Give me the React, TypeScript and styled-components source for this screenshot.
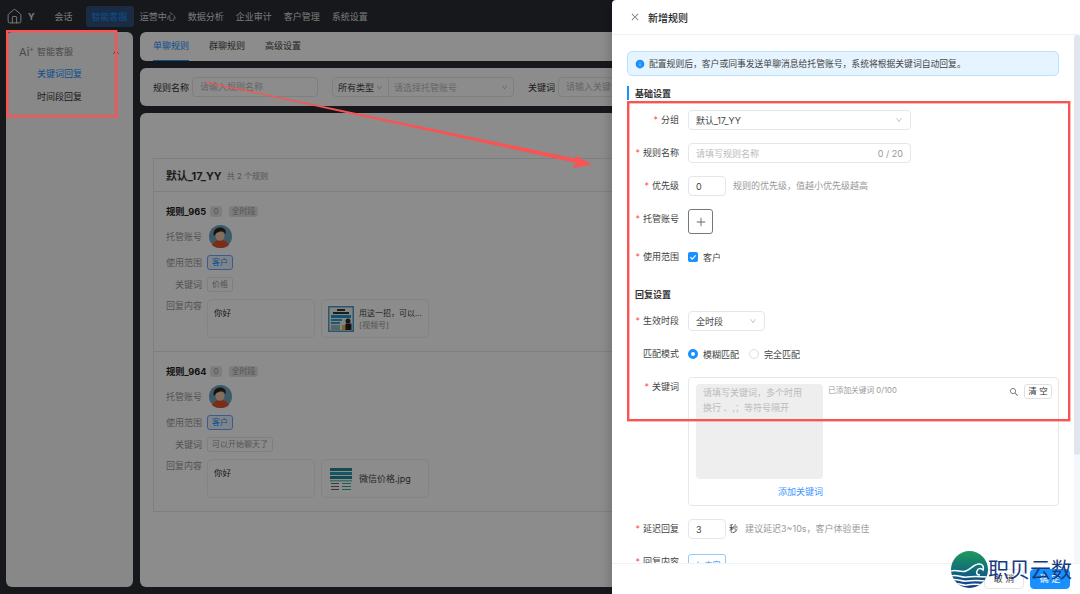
import React from "react";
import styled, { createGlobalStyle } from "styled-components";
import { House } from "lucide-react";
import {
  AiFillInfoCircle,
  AiOutlineClose,
  AiOutlineDown,
  AiOutlinePlus,
  AiOutlineSearch,
  AiOutlineUp,
} from "react-icons/ai";

const GlobalStyle = createGlobalStyle`
  html, body {
    margin: 0;
    padding: 0;
    height: 100%;
    overflow: hidden;
  }
  body {
    font-family: Inter, "Noto Sans CJK SC", sans-serif;
    font-size: 9px;
    color: #333;
  }
  * {
    box-sizing: border-box;
  }
`;

const NAV_ITEMS = ["运营中心", "数据分析", "企业审计", "客户管理", "系统设置"];

const Avatar = () => (
  <AvatarSvg viewBox="0 0 23 23">
    <circle cx="11.5" cy="11.5" r="11.5" fill="#6fa8bd" />
    <path d="M3 20c2-4 5-5 8.500-5s6.500 1 8.500 5c-2 2-5 3-8.500 3S5 22 3 20z" fill="#e0552b" />
    <ellipse cx="11" cy="11" rx="4.500" ry="4.800" fill="#f2c6a6" />
    <path d="M4.800 11c-1.500-6 3-8.500 6.500-8.500s6.500 2.500 5.200 7c-1-2.200-2.500-3.200-4.500-3.200-2 1-4 1-5 2-.5 1-1 1.900-2.200 2.700z" fill="#2b2320" />
  </AvatarSvg>
);

const VideoThumb = () => (
  <svg width="26" height="26" viewBox="0 0 26 26">
    <rect width="26" height="26" fill="#4f9fc9" />
    <rect x="1.500" y="1.500" width="23" height="23" fill="#eef3f2" />
    <rect x="9" y="3" width="8" height="2" fill="#333" />
    <rect x="5" y="6" width="16" height="2" fill="#333" />
    <rect x="3" y="9" width="20" height="3" fill="#1d9ad0" />
    <rect x="3" y="13" width="11" height="2" fill="#3aa0c8" />
    <rect x="3" y="16" width="9" height="2" fill="#3aa0c8" />
    <rect x="14" y="19" width="5" height="5" fill="#e9b949" />
    <circle cx="20" cy="15" r="2.500" fill="#2a2a2a" />
    <rect x="17.500" y="17.500" width="6" height="6.500" fill="#222" />
    <rect x="3" y="19" width="9" height="5" fill="#9bb" />
  </svg>
);

const ImageThumb = () => (
  <svg width="26" height="26" viewBox="0 0 26 26">
    <rect x="2" y="2" width="22" height="3" fill="#1f8a9c" />
    <rect x="2" y="6" width="22" height="3" fill="#2a9cb0" />
    <rect x="2" y="10" width="22" height="3" fill="#1f8a9c" />
    <rect x="2" y="14" width="22" height="1.500" fill="#7cc4c9" />
    <rect x="3" y="17" width="8" height="1" fill="#666" />
    <rect x="14" y="17" width="9" height="1" fill="#3a9" />
    <rect x="3" y="20" width="8" height="1" fill="#666" />
    <rect x="14" y="20" width="9" height="1" fill="#3a9" />
    <rect x="3" y="23" width="8" height="1" fill="#666" />
    <rect x="14" y="23" width="9" height="1" fill="#3a9" />
  </svg>
);

const RULES = [
  {
    name: "规则_965",
    keyword: "价格",
    thumb: <VideoThumb />,
    fileTitle: "用这一招，可以...",
    fileSub: "[视频号]",
  },
  {
    name: "规则_964",
    keyword: "可以开始聊天了",
    thumb: <ImageThumb />,
    fileTitle: "微信价格.jpg",
  },
];

const App = () => {
  return (
    <Page>
      <GlobalStyle />
      <Header>
        <Brand>
          <House size={17} strokeWidth={1.4} />
          <BrandLetter>Y</BrandLetter>
        </Brand>
        <NavItem $first>会话</NavItem>
        <NavItem $active>智能客服</NavItem>
        {NAV_ITEMS.map((item) => (
          <NavItem key={item}>{item}</NavItem>
        ))}
      </Header>

      <Workspace>
        <Sidebar>
          <SideHead>
            <AiMark>
              Ai<sup>+</sup>
            </AiMark>
            <SideTitle>智能客服</SideTitle>
            <AiOutlineUp size={8} />
          </SideHead>
          <SideItem $active>关键词回复</SideItem>
          <SideItem>时间段回复</SideItem>
        </Sidebar>

        <Main>
          <TabsPanel>
            <Tab $active>单聊规则</Tab>
            <Tab>群聊规则</Tab>
            <Tab>高级设置</Tab>
          </TabsPanel>

          <FilterPanel>
            <FilterLabel>规则名称</FilterLabel>
            <FilterInput $width={126}>请输入规则名称</FilterInput>
            <SelectGroup>
              <GroupPart $width={55}>
                所有类型
                <AiOutlineDown size={7} color="#aaa" />
              </GroupPart>
              <GroupPart $width={125} $placeholder>
                请选择托管账号
                <AiOutlineDown size={7} color="#aaa" />
              </GroupPart>
            </SelectGroup>
            <FilterLabel $left={14}>关键词</FilterLabel>
            <FilterInput $width={120}>请输入关键词</FilterInput>
          </FilterPanel>

          <ContentPanel>
            <RuleGroup>
              <GroupHead>
                <GroupName>默认_17_YY</GroupName>
                <GroupCount>共 2 个规则</GroupCount>
              </GroupHead>
              {RULES.map((rule) => (
                <Rule key={rule.name}>
                  <RuleTitle>
                    <RuleName>{rule.name}</RuleName>
                    <GreyBadge $num>0</GreyBadge>
                    <GreyBadge>全时段</GreyBadge>
                  </RuleTitle>
                  <RuleRow>
                    <RuleLabel>托管账号</RuleLabel>
                    <Avatar />
                  </RuleRow>
                  <RuleRow>
                    <RuleLabel>使用范围</RuleLabel>
                    <RuleTag $blue>客户</RuleTag>
                  </RuleRow>
                  <RuleRow>
                    <RuleLabel>关键词</RuleLabel>
                    <RuleTag>{rule.keyword}</RuleTag>
                  </RuleRow>
                  <RuleRow $top>
                    <RuleLabel>回复内容</RuleLabel>
                    <ReplyCard>你好</ReplyCard>
                    <ReplyCard $file>
                      {rule.thumb}
                      <div>
                        <FileTitle $small={!!rule.fileSub}>{rule.fileTitle}</FileTitle>
                        {rule.fileSub && <FileSub>{rule.fileSub}</FileSub>}
                      </div>
                    </ReplyCard>
                  </RuleRow>
                </Rule>
              ))}
            </RuleGroup>
          </ContentPanel>
        </Main>
      </Workspace>

      <Mask />

      <Drawer>
        <DrawerHead>
          <AiOutlineClose size={10} color="#777" />
          <DrawerTitle>新增规则</DrawerTitle>
        </DrawerHead>

        <DrawerBody>
          <Notice>
            <AiFillInfoCircle size={10} color="#1890ff" />
            配置规则后，客户或同事发送单聊消息给托管账号，系统将根据关键词自动回复。
          </Notice>

          <SectionTitle $bar>基础设置</SectionTitle>

          <FormRow>
            <FormLabel $required>分组</FormLabel>
            <Field $width={223} $between>
              默认_17_YY
              <AiOutlineDown size={8} color="#bbb" />
            </Field>
          </FormRow>
          <FormRow>
            <FormLabel $required>规则名称</FormLabel>
            <Field $width={223} $between $placeholder>
              请填写规则名称
              <Counter>0 / 20</Counter>
            </Field>
          </FormRow>
          <FormRow>
            <FormLabel $required>优先级</FormLabel>
            <Field $width={38}>0</Field>
            <Hint>规则的优先级，值越小优先级越高</Hint>
          </FormRow>
          <FormRow>
            <FormLabel $required>托管账号</FormLabel>
            <AddButton>
              <AiOutlinePlus size={12} color="#666" />
            </AddButton>
          </FormRow>
          <FormRow>
            <FormLabel $required>使用范围</FormLabel>
            <Choice>
              <CheckBox>
                <svg width="8" height="8" viewBox="0 0 8 8">
                  <path d="M1.300 4.200l1.900 1.900 3.500-3.800" fill="none" stroke="#fff" strokeWidth="1.200" />
                </svg>
              </CheckBox>
              客户
            </Choice>
          </FormRow>

          <SectionTitle $spaced>回复设置</SectionTitle>

          <FormRow>
            <FormLabel $required>生效时段</FormLabel>
            <Field $width={77} $between>
              全时段
              <AiOutlineDown size={8} color="#bbb" />
            </Field>
          </FormRow>
          <FormRow>
            <FormLabel>匹配模式</FormLabel>
            <Choice>
              <Radio $checked />
              模糊匹配
            </Choice>
            <Choice>
              <Radio />
              完全匹配
            </Choice>
          </FormRow>
          <FormRow>
            <FormLabel $required>关键词</FormLabel>
            <KeywordBox>
              <KeywordInput>
                <KeywordArea>
                  请填写关键词，多个时用
                  <br />
                  换行 、,；等符号隔开
                </KeywordArea>
                <AddKeyword>添加关键词</AddKeyword>
              </KeywordInput>
              <KeywordStats>已添加关键词 0/100</KeywordStats>
              <AiOutlineSearch size={10} color="#666" />
              <ClearButton>清 空</ClearButton>
            </KeywordBox>
          </FormRow>
          <FormRow>
            <FormLabel $required>延迟回复</FormLabel>
            <Field $width={38}>3</Field>
            <Unit>秒</Unit>
            <Hint>建议延迟3~10s，客户体验更佳</Hint>
          </FormRow>
          <FormRow>
            <FormLabel $required>回复内容</FormLabel>
            <ContentButton>
              <AiOutlinePlus size={8} />
              内容
            </ContentButton>
          </FormRow>

          <ScrollTrack>
            <ScrollThumb />
          </ScrollTrack>
        </DrawerBody>

        <DrawerFoot>
          <FootButton>取 消</FootButton>
          <FootButton $primary>确 定</FootButton>
        </DrawerFoot>
      </Drawer>

      <Annotation viewBox="0 0 1080 594">
        <g fill="none" stroke="#f95353" strokeWidth="2.400">
          <rect x="7.200" y="31.200" width="109" height="85" />
          <rect x="628.200" y="102.200" width="441" height="318" />
        </g>
        <polygon
          points="205,81.500 576.500,158.800 574,155 592,164.500 573,168 575.500,162.800 205,82.500"
          fill="#f95353"
        />
      </Annotation>

      <Watermark>
        <svg width="37" height="37" viewBox="0 0 37 37">
          <defs>
            <linearGradient id="globe" x1="0" y1="0" x2="0" y2="1">
              <stop offset="0" stopColor="#1f9a5c" />
              <stop offset="0.5" stopColor="#0f6f7a" />
              <stop offset="1" stopColor="#143a8c" />
            </linearGradient>
            <clipPath id="globeClip">
              <circle cx="18.500" cy="18.500" r="18.500" />
            </clipPath>
          </defs>
          <circle cx="18.500" cy="18.500" r="18.500" fill="url(#globe)" />
          <g clipPath="url(#globeClip)" fill="none" stroke="#fff" strokeWidth="1.500">
            <path d="M0 20c6-2 10 2 15 0s8-7 13-7c4 0 5 3 4 6-2-2-5-2-6 1-1 2 0 4 3 4" />
            <path d="M0 25c6-2 10 2 16 1s9-1 21 0" />
            <path d="M0 29c6-2 10 2 16 1s9-1 21 0" />
            <path d="M2 33c5-2 9 2 14 1s9-1 18 0" />
          </g>
        </svg>
        <WatermarkText>职贝云数</WatermarkText>
      </Watermark>
    </Page>
  );
};

const Page = styled.div`
  position: relative;
  width: 1080px;
  height: 594px;
  overflow: hidden;
  background: #2b2d33;
  display: flex;
  flex-direction: column;
`;
const Header = styled.header`
  height: 32px;
  flex-shrink: 0;
  display: flex;
  align-items: center;
  padding: 0 6px;
  color: #ddd;
`;
const Brand = styled.div`
  display: flex;
  align-items: center;
  gap: 5px;
`;
const BrandLetter = styled.span`
  font-size: 9px;
  font-weight: 700;
`;
const NavItem = styled.div<{ $active?: boolean; $first?: boolean }>`
  height: 21px;
  line-height: 21px;
  padding: 0 6px;
  margin-left: ${(p) => (p.$first ? "14px" : "0")};
  margin-right: ${(p) => (p.$first ? "7px" : "0")};
  border-radius: 3px;
  font-size: 9px;
  background: ${(p) => (p.$active ? "#31507c" : "transparent")};
  color: ${(p) => (p.$active ? "#1890ff" : "#ddd")};
`;
const Workspace = styled.div`
  flex: 1;
  min-height: 0;
  display: flex;
  gap: 7px;
  padding: 0 6px 7px;
`;
const Sidebar = styled.aside`
  width: 127px;
  flex-shrink: 0;
  background: #f7f7f7;
  border-radius: 6px;
  padding-top: 9px;
`;
const SideHead = styled.div`
  display: flex;
  align-items: center;
  height: 21px;
  padding: 0 13px;
  color: #888;
  svg {
    margin-left: auto;
    color: #666;
  }
`;
const AiMark = styled.span`
  width: 18px;
  font-size: 11px;
  sup {
    font-size: 7px;
    line-height: 0;
  }
`;
const SideTitle = styled.span`
  font-size: 9px;
`;
const SideItem = styled.div<{ $active?: boolean }>`
  height: 23px;
  line-height: 23px;
  padding-left: 31px;
  font-size: 9px;
  color: ${(p) => (p.$active ? "#1890ff" : "#333")};
`;
const Main = styled.main`
  flex: 1;
  min-width: 0;
  display: flex;
  flex-direction: column;
  gap: 7px;
`;
const TabsPanel = styled.div`
  height: 29px;
  flex-shrink: 0;
  background: #fff;
  border-radius: 6px;
  display: flex;
  gap: 20px;
  padding-left: 13px;
`;
const Tab = styled.div<{ $active?: boolean }>`
  height: 29px;
  line-height: 28px;
  font-size: 9px;
  color: ${(p) => (p.$active ? "#1890ff" : "#444")};
  border-bottom: 1.500px solid ${(p) => (p.$active ? "#1890ff" : "transparent")};
`;
const FilterPanel = styled.div`
  height: 38px;
  flex-shrink: 0;
  background: #fff;
  border-radius: 6px;
  display: flex;
  align-items: center;
  padding-left: 13px;
`;
const FilterLabel = styled.span<{ $left?: number }>`
  font-size: 9px;
  color: #333;
  white-space: nowrap;
  margin-left: ${(p) => p.$left ?? 0}px;
  margin-right: 3px;
`;
const FilterInput = styled.div<{ $width: number }>`
  width: ${(p) => p.$width}px;
  height: 20px;
  line-height: 18px;
  padding: 0 7px;
  border: 1px solid #e8e8e8;
  border-radius: 4px;
  font-size: 9px;
  color: #bbb;
  flex-shrink: 0;
`;
const SelectGroup = styled.div`
  margin-left: 14px;
  display: flex;
  height: 20px;
  border: 1px solid #e8e8e8;
  border-radius: 4px;
`;
const GroupPart = styled.div<{ $width: number; $placeholder?: boolean }>`
  width: ${(p) => p.$width}px;
  padding: 0 5px;
  display: flex;
  align-items: center;
  justify-content: space-between;
  font-size: 9px;
  color: ${(p) => (p.$placeholder ? "#bbb" : "#444")};
  & + & {
    border-left: 1px solid #e8e8e8;
  }
`;
const ContentPanel = styled.div`
  flex: 1;
  min-height: 0;
  background: #fff;
  border-radius: 6px;
  padding: 45px 0 0 13px;
`;
const RuleGroup = styled.section`
  border: 1px solid #e8e8e8;
  border-right: 0;
  border-bottom: 0;
`;
const GroupHead = styled.div`
  height: 33px;
  display: flex;
  align-items: center;
  gap: 5px;
  padding: 0 12px;
  border-bottom: 1px solid #e8e8e8;
`;
const GroupName = styled.span`
  font-size: 10.800px;
  font-weight: 700;
  color: #333;
`;
const GroupCount = styled.span`
  font-size: 8px;
  color: #999;
`;
const Rule = styled.div`
  height: 160px;
  padding: 12px 12px 0;
  display: flex;
  flex-direction: column;
  gap: 7px;
  border-bottom: 1px solid #e8e8e8;
`;
const RuleTitle = styled.div`
  height: 14px;
  display: flex;
  align-items: center;
  gap: 7px;
`;
const RuleName = styled.span`
  font-size: 9.200px;
  font-weight: 700;
  color: #222;
  width: 37px;
  white-space: nowrap;
`;
const GreyBadge = styled.span<{ $num?: boolean }>`
  height: 11px;
  line-height: 11px;
  padding: 0 ${(p) => (p.$num ? "3.500px" : "2.500px")};
  border-radius: 3px;
  font-size: 8px;
  color: #999;
  background: #e4e4e4;
`;
const RuleRow = styled.div<{ $top?: boolean }>`
  display: flex;
  align-items: ${(p) => (p.$top ? "flex-start" : "center")};
  gap: 5px;
`;
const RuleLabel = styled.span`
  width: 36px;
  line-height: 14px;
  text-align: right;
  white-space: nowrap;
  font-size: 9px;
  color: #999;
  flex-shrink: 0;
`;
const AvatarSvg = styled.svg`
  width: 23px;
  height: 23px;
  margin-left: 2px;
`;
const RuleTag = styled.span<{ $blue?: boolean }>`
  height: 15px;
  line-height: 13px;
  padding: 0 4px;
  border: 1px solid ${(p) => (p.$blue ? "#66a6ff" : "#e8e8e8")};
  background: ${(p) => (p.$blue ? "#eaf3ff" : "#fff")};
  border-radius: 3px;
  font-size: 8px;
  color: ${(p) => (p.$blue ? "#1890ff" : "#999")};
`;
const ReplyCard = styled.div<{ $file?: boolean }>`
  width: 108px;
  height: 39px;
  border: 1px solid #eee;
  border-radius: 5px;
  padding: ${(p) => (p.$file ? "0 6px" : "6px")};
  font-size: 8.500px;
  color: #333;
  display: flex;
  align-items: ${(p) => (p.$file ? "center" : "flex-start")};
  gap: 5px;
  & + & {
    margin-left: 1px;
  }
`;
const FileTitle = styled.div<{ $small?: boolean }>`
  font-size: ${(p) => (p.$small ? "8px" : "9px")};
  line-height: 12px;
  color: #444;
  white-space: nowrap;
`;
const FileSub = styled.div`
  font-size: 8px;
  line-height: 12px;
  color: #999;
`;
const Mask = styled.div`
  position: absolute;
  inset: 0;
  background: rgba(0, 0, 0, 0.45);
`;
const Annotation = styled.svg`
  position: absolute;
  inset: 0;
  width: 1080px;
  height: 594px;
`;
const Drawer = styled.aside`
  position: absolute;
  top: 0;
  right: 0;
  bottom: 0;
  width: 468px;
  background: #fff;
  border-radius: 4px 0 0 0;
  box-shadow: -4px 0 8px rgba(0, 0, 0, 0.14);
  display: flex;
  flex-direction: column;
`;
const DrawerHead = styled.div`
  height: 35px;
  flex-shrink: 0;
  display: flex;
  align-items: center;
  gap: 8px;
  padding-left: 18px;
  border-bottom: 1px solid #f2f2f2;
`;
const DrawerTitle = styled.span`
  font-size: 10px;
  font-weight: 500;
  color: #222;
`;
const DrawerBody = styled.div`
  position: relative;
  flex: 1;
  min-height: 0;
  overflow: hidden;
  padding: 16px 21px 0 15px;
`;
const Notice = styled.div`
  height: 25px;
  display: flex;
  align-items: center;
  gap: 4px;
  padding-left: 7px;
  background: #e6f4ff;
  border: 1px solid #bae0ff;
  border-radius: 5px;
  font-size: 8.800px;
  color: #444;
`;
const SectionTitle = styled.div<{ $bar?: boolean; $spaced?: boolean }>`
  height: 14px;
  line-height: 15px;
  margin: ${(p) => (p.$spaced ? "20px" : "10px")} 0 10px;
  padding-left: ${(p) => (p.$bar ? "6px" : "8px")};
  border-left: ${(p) => (p.$bar ? "2px solid #1890ff" : "0")};
  font-size: 9px;
  font-weight: 700;
  color: #333;
`;
const FormRow = styled.div`
  display: flex;
  align-items: flex-start;
  margin-bottom: 13px;
`;
const FormLabel = styled.label<{ $required?: boolean }>`
  width: 52px;
  margin-right: 9px;
  flex-shrink: 0;
  line-height: 20px;
  text-align: right;
  white-space: nowrap;
  font-size: 9px;
  color: #444;
  &::before {
    content: "${(p) => (p.$required ? "*" : "")}";
    color: #ff4d4f;
    margin-right: 3px;
  }
`;
const Field = styled.div<{ $width: number; $between?: boolean; $placeholder?: boolean }>`
  width: ${(p) => p.$width}px;
  height: 20px;
  padding: 0 7px;
  display: flex;
  align-items: center;
  justify-content: ${(p) => (p.$between ? "space-between" : "flex-start")};
  border: 1px solid #e6e6e6;
  border-radius: 4px;
  font-size: 9px;
  color: ${(p) => (p.$placeholder ? "#bbb" : "#444")};
`;
const Counter = styled.span`
  color: #999;
`;
const Hint = styled.span`
  margin-left: 7px;
  line-height: 20px;
  font-size: 9px;
  color: #999;
`;
const Unit = styled.span`
  margin-left: 3px;
  line-height: 20px;
  font-size: 9px;
  color: #444;
`;
const AddButton = styled.div`
  width: 25px;
  height: 25px;
  display: flex;
  align-items: center;
  justify-content: center;
  border: 1px solid #777;
  border-radius: 3px;
`;
const Choice = styled.div`
  height: 20px;
  display: flex;
  align-items: center;
  gap: 5px;
  margin-right: 10px;
  font-size: 9px;
  color: #444;
`;
const CheckBox = styled.span`
  width: 10px;
  height: 10px;
  display: flex;
  align-items: center;
  justify-content: center;
  border-radius: 2px;
  background: #1890ff;
`;
const Radio = styled.span<{ $checked?: boolean }>`
  width: 10px;
  height: 10px;
  border-radius: 50%;
  background: #fff;
  border: ${(p) => (p.$checked ? "3px solid #1890ff" : "1px solid #ddd")};
`;
const KeywordBox = styled.div`
  flex: 1;
  height: 129px;
  padding: 6px 6px 0 7px;
  display: flex;
  align-items: flex-start;
  border: 1px solid #e8e8e8;
  border-radius: 4px;
  > svg {
    margin: 3px 5px 0 0;
  }
`;
const KeywordInput = styled.div`
  width: 127px;
  flex-shrink: 0;
  display: flex;
  flex-direction: column;
`;
const KeywordArea = styled.div`
  height: 95px;
  padding: 1px 7px;
  background: #eee;
  border-radius: 4px;
  line-height: 15px;
  font-size: 9px;
  color: #bbb;
  white-space: nowrap;
`;
const AddKeyword = styled.span`
  align-self: flex-end;
  margin-top: 6px;
  font-size: 9px;
  color: #4096ff;
`;
const KeywordStats = styled.span`
  flex: 1;
  margin-left: 5px;
  line-height: 14px;
  font-size: 7.700px;
  color: #999;
`;
const ClearButton = styled.div`
  width: 28px;
  height: 15px;
  line-height: 13px;
  text-align: center;
  border: 1px solid #e0e0e0;
  border-radius: 3px;
  font-size: 8.500px;
  color: #333;
`;
const ContentButton = styled.div`
  width: 38px;
  height: 20px;
  margin-top: 2px;
  display: flex;
  align-items: center;
  justify-content: center;
  gap: 3px;
  border: 1px solid #91caff;
  border-radius: 3px;
  font-size: 8px;
  color: #1890ff;
`;
const ScrollTrack = styled.div`
  position: absolute;
  top: 0;
  right: 0;
  bottom: 0;
  width: 6px;
  background: #f5f8fb;
`;
const ScrollThumb = styled.div`
  height: 420px;
  background: #dfe6ee;
  border-radius: 3px;
`;
const DrawerFoot = styled.div`
  height: 31px;
  flex-shrink: 0;
  display: flex;
  justify-content: flex-end;
  align-items: center;
  gap: 6px;
  padding-right: 10px;
  background: #fff;
  border-top: 1px solid #f2f2f2;
`;
const FootButton = styled.div<{ $primary?: boolean }>`
  width: 40px;
  height: 20px;
  line-height: 18px;
  text-align: center;
  border: 1px solid ${(p) => (p.$primary ? "#1890ff" : "#e6e6e6")};
  background: ${(p) => (p.$primary ? "#1890ff" : "#fff")};
  color: ${(p) => (p.$primary ? "#fff" : "#444")};
  border-radius: 4px;
  font-size: 9px;
`;
const Watermark = styled.div`
  position: absolute;
  left: 951px;
  top: 551px;
  display: flex;
  align-items: flex-start;
`;
const WatermarkText = styled.span`
  margin-top: 6px;
  font-size: 21px;
  line-height: 26px;
  white-space: nowrap;
  color: #17397f;
`;

export default App;
